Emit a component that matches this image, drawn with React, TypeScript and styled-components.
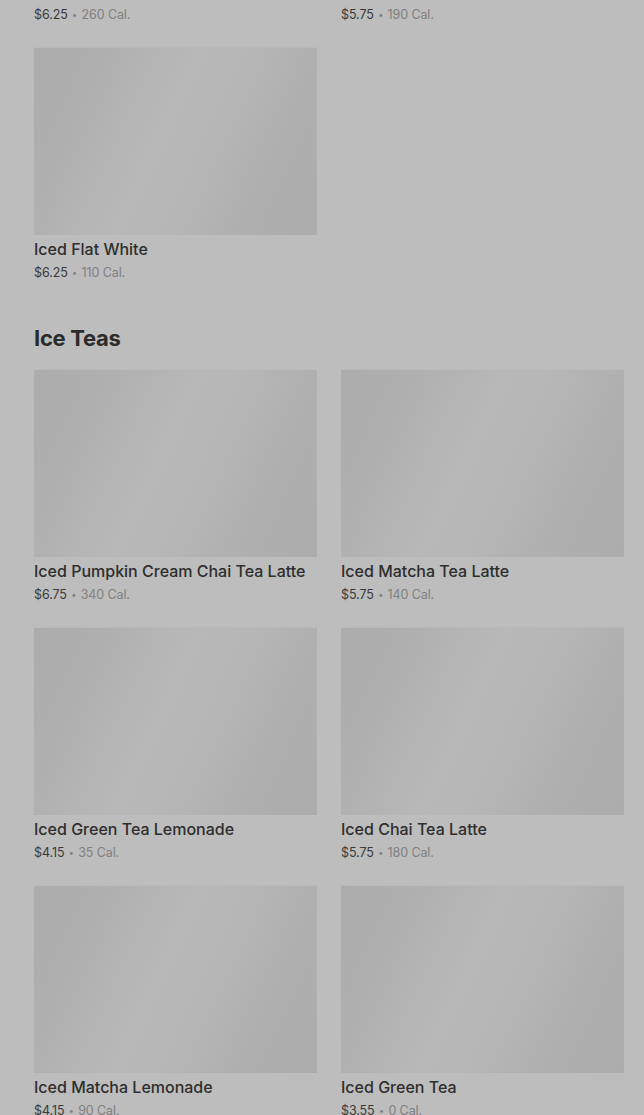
import React from "react";
import styled, { createGlobalStyle } from "styled-components";

const Global = createGlobalStyle`
  html, body { margin: 0; padding: 0; background: #bdbdbd; }
  body { font-family: Inter, "Noto Sans", "Liberation Sans", sans-serif; overflow: hidden; }
`;

const Page = styled.main`
  padding: 0 20px 0 34px;
  margin-top: -210px;
  display: flex;
  flex-direction: column;
`;

const Section = styled.section`
  display: flex;
  flex-direction: column;
`;

const Heading = styled.h2`
  margin: 40px 0 16px;
  font-size: 22px;
  line-height: 32px;
  font-weight: 700;
  color: #2b2b2b;
  letter-spacing: -0.3px;
`;

const Grid = styled.div`
  display: grid;
  grid-template-columns: 283px 283px;
  column-gap: 24px;
  row-gap: 24px;
`;

const Card = styled.div`
  display: flex;
  flex-direction: column;
`;

const Thumb = styled.div`
  height: 187px;
  background: linear-gradient(
    115deg,
    #acacac 0%,
    #b0b0b0 22%,
    #b8b8b8 44%,
    #b7b7b7 56%,
    #b0b0b0 76%,
    #acacac 100%
  );
  box-shadow: 0 -1px 0 #b9b9b9;
`;

const Title = styled.div`
  margin-top: 4px;
  font-size: 16px;
  line-height: 20px;
  font-weight: 500;
  color: #2e2e2e;
  white-space: nowrap;
`;

const Meta = styled.div`
  margin-top: 3px;
  padding-top: 1px;
  font-size: 12.5px;
  line-height: 19px;
  color: #808080;
  white-space: nowrap;
  letter-spacing: -0.1px;
`;

const Price = styled.span`
  color: #3a3a3a;
`;

const Dot = styled.span`
  display: inline-block;
  font-size: 9px;
  margin: 0 1px;
  vertical-align: 1px;
`;

type Item = { name: string; price: string; cal: number };

const coffees: Item[] = [
  { name: "Iced Caffè Latte", price: "$6.25", cal: 260 },
  { name: "Iced Caramel Macchiato", price: "$5.75", cal: 190 },
  { name: "Iced Flat White", price: "$6.25", cal: 110 },
];

const teas: Item[] = [
  { name: "Iced Pumpkin Cream Chai Tea Latte", price: "$6.75", cal: 340 },
  { name: "Iced Matcha Tea Latte", price: "$5.75", cal: 140 },
  { name: "Iced Green Tea Lemonade", price: "$4.15", cal: 35 },
  { name: "Iced Chai Tea Latte", price: "$5.75", cal: 180 },
  { name: "Iced Matcha Lemonade", price: "$4.15", cal: 90 },
  { name: "Iced Green Tea", price: "$3.55", cal: 0 },
];

const ItemCard = ({ item }: { item: Item }) => (
  <Card>
    <Thumb />
    <Title>{item.name}</Title>
    <Meta>
      <Price>{item.price}</Price> <Dot>•</Dot> {item.cal} Cal.
    </Meta>
  </Card>
);

export default function App() {
  return (
    <>
      <Global />
      <Page>
        <Section>
          <Grid>
            {coffees.map((c) => (
              <ItemCard key={c.name} item={c} />
            ))}
          </Grid>
        </Section>
        <Section>
          <Heading>Ice Teas</Heading>
          <Grid>
            {teas.map((c) => (
              <ItemCard key={c.name} item={c} />
            ))}
          </Grid>
        </Section>
      </Page>
    </>
  );
}
